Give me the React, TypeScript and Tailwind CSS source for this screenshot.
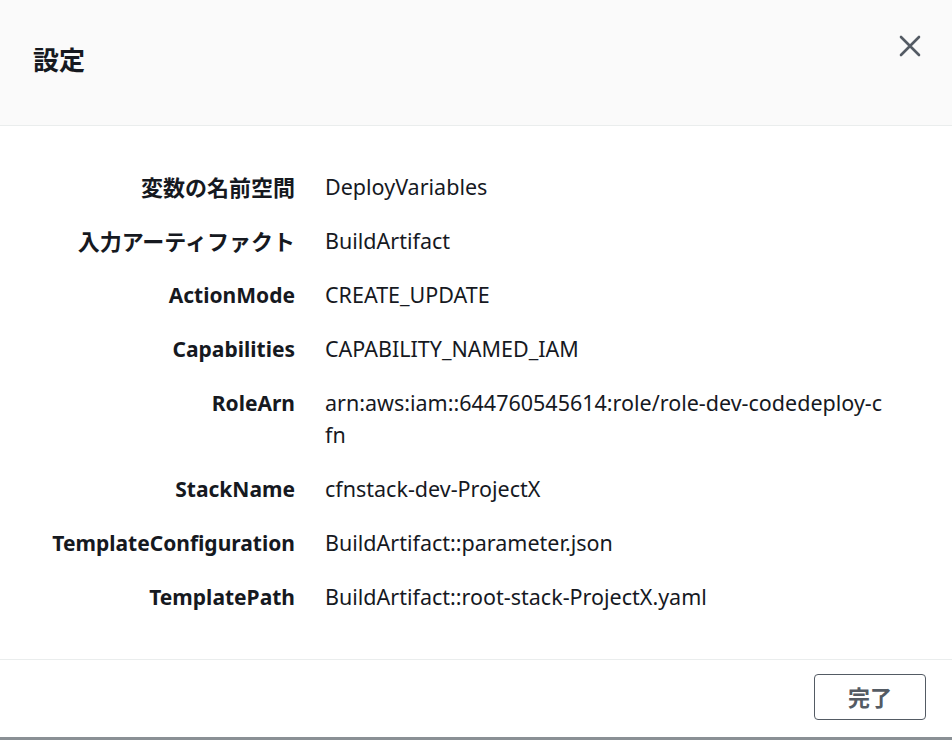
const rows: [string, string][] = [
  ['変数の名前空間', 'DeployVariables'],
  ['入力アーティファクト', 'BuildArtifact'],
  ['ActionMode', 'CREATE_UPDATE'],
  ['Capabilities', 'CAPABILITY_NAMED_IAM'],
  ['RoleArn', 'arn:aws:iam::644760545614:role/role-dev-codedeploy-cfn'],
  ['StackName', 'cfnstack-dev-ProjectX'],
  ['TemplateConfiguration', 'BuildArtifact::parameter.json'],
  ['TemplatePath', 'BuildArtifact::root-stack-ProjectX.yaml'],
];

const isJa = (s: string) => /[^\x00-\x7f]/.test(s);

export default function App() {
  return (
    <div
      className="w-[952px] h-[740px] bg-white flex flex-col text-[#16191f] overflow-hidden"
      style={{ fontFamily: '"Noto Sans", "Noto Sans CJK JP", sans-serif' }}
    >
      {/* ヘッダー */}
      <div className="h-[126px] shrink-0 bg-[#fafafa] border-b border-[#eaeded] flex items-center justify-between pl-[33px] pr-[30px]">
        <h2 className="text-[26px] font-bold leading-none -mt-[6px]">設定</h2>
        <button className="self-start mt-[34px] text-[#545b64]">
          <svg width="24" height="24" viewBox="0 0 24 24" fill="none">
            <path d="M3 3L21 21M21 3L3 21" stroke="currentColor" strokeWidth="2.6" strokeLinecap="round" />
          </svg>
        </button>
      </div>

      {/* 本文 */}
      <div className="flex-1 pt-[45px]">
        <div className="grid grid-cols-[295px_562px] gap-x-[30px] gap-y-[22px] leading-[32px]">
          {rows.map(([label, value]) => (
            <div key={label} className="contents">
              <div className={'text-right font-bold whitespace-nowrap ' + (isJa(label) ? 'text-[22px]' : 'text-[21px]')}>
                {label}
              </div>
              <div className="break-all text-[21.5px]">{value}</div>
            </div>
          ))}
        </div>
      </div>

      {/* フッター */}
      <div className="h-[78px] shrink-0 border-t border-[#eaeded] flex items-start justify-end pr-[26px] pt-[14px]">
        <button className="w-[112px] h-[46px] border border-[#545b64] rounded-[4px] text-[22px] font-bold text-[#545b64]">
          完了
        </button>
      </div>
      <div className="h-[3px] bg-[#8a9095] shrink-0" />
    </div>
  );
}
